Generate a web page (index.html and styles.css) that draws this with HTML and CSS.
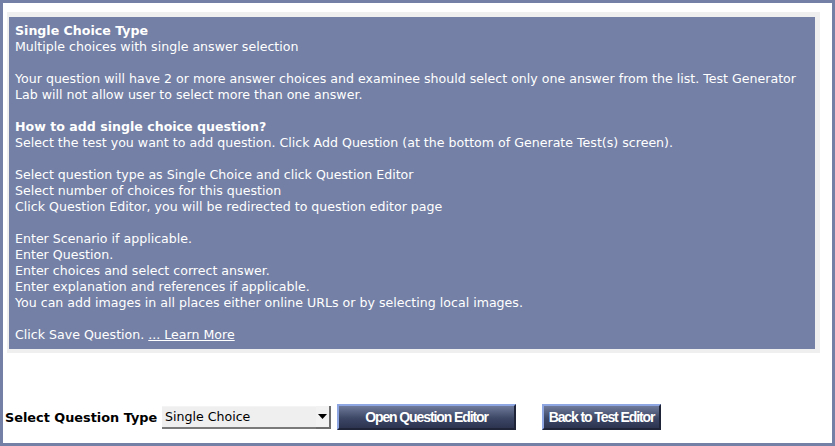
FILE: index.html
```html
<!DOCTYPE html>
<html lang="en">
<head>
    <meta charset="UTF-8">
    <title>Single Choice Type</title>
    <link rel="stylesheet" href="styles.css">
</head>
<body>
    <div class="page">
        <div class="info-frame">
            <div class="info">
                <b>Single Choice Type</b><br>
                Multiple choices with single answer selection<br>
                <br>
                Your question will have 2 or more answer choices and examinee should select only one answer from the list. Test Generator<br>
                Lab will not allow user to select more than one answer.<br>
                <br>
                <b>How to add single choice question?</b><br>
                Select the test you want to add question. Click Add Question (at the bottom of Generate Test(s) screen).<br>
                <br>
                Select question type as Single Choice and click Question Editor<br>
                Select number of choices for this question<br>
                Click Question Editor, you will be redirected to question editor page<br>
                <br>
                Enter Scenario if applicable.<br>
                Enter Question.<br>
                Enter choices and select correct answer.<br>
                Enter explanation and references if applicable.<br>
                You can add images in all places either online URLs or by selecting local images.<br>
                <br>
                Click Save Question. <a href="#">... Learn More</a>
            </div>
        </div>

        <div class="toolbar">
            <label class="type-label" for="qtype">Select Question Type</label>
            <span class="select-wrap">
                <select id="qtype" class="type-select">
                    <option>Single Choice</option>
                    <option>Multiple Choice</option>
                    <option>True / False</option>
                </select>
                <span class="select-arrow">
                    <svg width="9" height="5" viewBox="0 0 9 5"><path d="M0 0 H9 L4.5 5 Z" fill="#000"/></svg>
                </span>
            </span>
            <button class="btn btn-open" type="button">Open Question Editor</button>
            <button class="btn btn-back" type="button">Back to Test Editor</button>
        </div>
    </div>
</body>
</html>
```

FILE: styles.css
```css
body {
    margin: 0;
    background: #7480a5;
    font-family: "DejaVu Sans", Verdana, sans-serif;
}
.page {
    width: 829px;
    height: 440px;
    margin: 3px;
    background: #fff;
    padding-top: 9px;
    box-sizing: border-box;
}
.info-frame {
    width: 813px;
    margin-left: 4px;
    padding: 5px 5px 4px 2px;
    box-sizing: border-box;
    background: #efefef;
}
.info {
    background: #7480a5;
    color: #fff;
    font-size: 12.6px;
    line-height: 16px;
    padding: 6px 6px 6px 6px;
    white-space: nowrap;
}
.info b {
    font-weight: bold;
}
.info a {
    color: #fff;
    text-decoration: underline;
}
.toolbar {
    display: flex;
    align-items: center;
    margin-top: 51px;
    padding-left: 2px;
}
.type-label {
    font-weight: bold;
    font-size: 12.85px;
    color: #000;
    width: 155px;
}
.select-wrap {
    position: relative;
    display: inline-block;
    width: 169px;
    height: 23px;
    margin-left: 2px;
}
.type-select {
    appearance: none;
    -webkit-appearance: none;
    width: 100%;
    height: 100%;
    margin: 0;
    padding: 0 0 0 3px;
    border: none;
    border-top: 1px solid #f4f4f4;
    border-bottom: 2px solid #7a7a7a;
    background: #efefef;
    font-family: "DejaVu Sans", Verdana, sans-serif;
    font-size: 12.6px;
    color: #000;
    outline: none;
}
.select-arrow {
    position: absolute;
    top: 0;
    right: 0;
    width: 15px;
    height: 23px;
    box-sizing: border-box;
    background: #f2f2f2;
    border-right: 2px solid #6e6e6e;
    border-bottom: 2px solid #6e6e6e;
    display: flex;
    align-items: center;
    justify-content: center;
    pointer-events: none;
}
.btn {
    height: 26px;
    padding: 0;
    border-top: 2px solid #8ea6e2;
    border-left: 2px solid #8ea6e2;
    border-right: 2px solid #1f2438;
    border-bottom: 2px solid #1f2438;
    background: linear-gradient(#6f7999, #3d4766 55%, #2c3450);
    color: #fff;
    font-family: "Liberation Sans", Arial, sans-serif;
    font-weight: bold;
    font-size: 14px;
    letter-spacing: -1.1px;
    cursor: pointer;
}
.btn-open {
    width: 179px;
    margin-left: 6px;
}
.btn-back {
    width: 119px;
    margin-left: 26px;
}
```
